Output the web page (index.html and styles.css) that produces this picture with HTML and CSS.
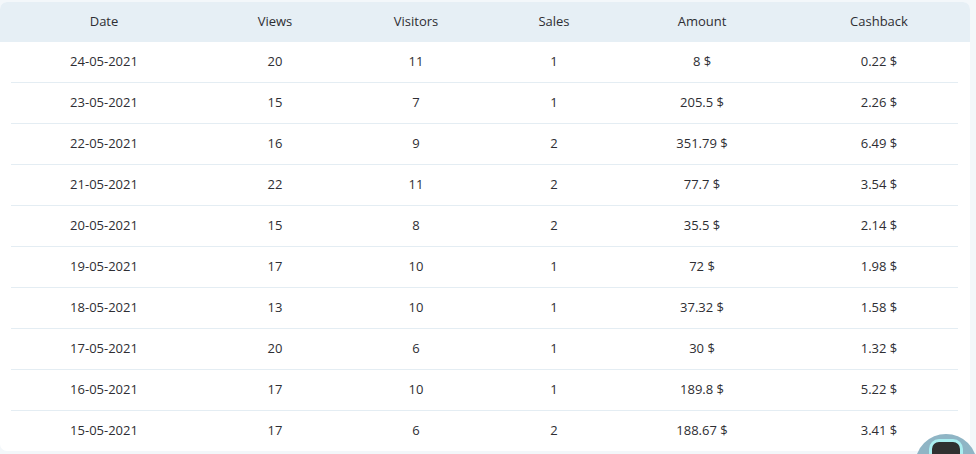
FILE: index.html
```html
<!DOCTYPE html>
<html>
<head>
<meta charset="utf-8">
<link rel="stylesheet" href="styles.css">
</head>
<body>
<div class="card">
  <div class="head">
    <div class="cell">Date</div><div class="cell">Views</div><div class="cell">Visitors</div><div class="cell">Sales</div><div class="cell">Amount</div><div class="cell last">Cashback</div>
  </div>
  <div class="body">
    <div class="row"><div class="cell">24-05-2021</div><div class="cell">20</div><div class="cell">11</div><div class="cell">1</div><div class="cell">8 $</div><div class="cell last">0.22 $</div></div>
    <div class="row"><div class="cell">23-05-2021</div><div class="cell">15</div><div class="cell">7</div><div class="cell">1</div><div class="cell">205.5 $</div><div class="cell last">2.26 $</div></div>
    <div class="row"><div class="cell">22-05-2021</div><div class="cell">16</div><div class="cell">9</div><div class="cell">2</div><div class="cell">351.79 $</div><div class="cell last">6.49 $</div></div>
    <div class="row"><div class="cell">21-05-2021</div><div class="cell">22</div><div class="cell">11</div><div class="cell">2</div><div class="cell">77.7 $</div><div class="cell last">3.54 $</div></div>
    <div class="row"><div class="cell">20-05-2021</div><div class="cell">15</div><div class="cell">8</div><div class="cell">2</div><div class="cell">35.5 $</div><div class="cell last">2.14 $</div></div>
    <div class="row"><div class="cell">19-05-2021</div><div class="cell">17</div><div class="cell">10</div><div class="cell">1</div><div class="cell">72 $</div><div class="cell last">1.98 $</div></div>
    <div class="row"><div class="cell">18-05-2021</div><div class="cell">13</div><div class="cell">10</div><div class="cell">1</div><div class="cell">37.32 $</div><div class="cell last">1.58 $</div></div>
    <div class="row"><div class="cell">17-05-2021</div><div class="cell">20</div><div class="cell">6</div><div class="cell">1</div><div class="cell">30 $</div><div class="cell last">1.32 $</div></div>
    <div class="row"><div class="cell">16-05-2021</div><div class="cell">17</div><div class="cell">10</div><div class="cell">1</div><div class="cell">189.8 $</div><div class="cell last">5.22 $</div></div>
    <div class="row"><div class="cell">15-05-2021</div><div class="cell">17</div><div class="cell">6</div><div class="cell">2</div><div class="cell">188.67 $</div><div class="cell last">3.41 $</div></div>
  </div>
</div>
<div class="chat"><div class="chat-inner"></div></div>
</body>
</html>
```
FILE: styles.css
```css
html, body {
  margin: 0;
  padding: 0;
}
body {
  background: #f3f7fa;
  font-family: "Open Sans", "Liberation Sans", sans-serif;
  font-size: 13px;
  color: #2e2e33;
  height: 454px;
  overflow: hidden;
}
.card {
  margin-top: 2px;
  width: 970px;
  background: #ffffff;
  border-radius: 7px;
  overflow: hidden;
}
.head, .row {
  display: grid;
  grid-template-columns: 186px 156px 126px 150px 146px 183px;
}
.head {
  background: #e6eff5;
  height: 38px;
  padding: 0 12px 2px 11px;
  align-items: center;
}
.body {
  padding: 0 12px 0 11px;
}
.row {
  height: 38px;
  padding-bottom: 2px;
  align-items: center;
  border-bottom: 1px solid #e4edf3;
}
.row:last-child {
  border-bottom: none;
}
.cell {
  text-align: center;
  white-space: nowrap;
  line-height: 18px;
}
.cell.last {
  padding-left: 25px;
}
.chat {
  position: fixed;
  left: 915px;
  top: 434px;
  width: 62px;
  height: 62px;
  border-radius: 50%;
  background: #8fb5c5;
}
.chat-inner {
  position: absolute;
  left: 14px;
  top: 5px;
  width: 28px;
  height: 36px;
  border: 3px solid #a9eef0;
  border-radius: 10px;
  background: #2f3030;
}
```
